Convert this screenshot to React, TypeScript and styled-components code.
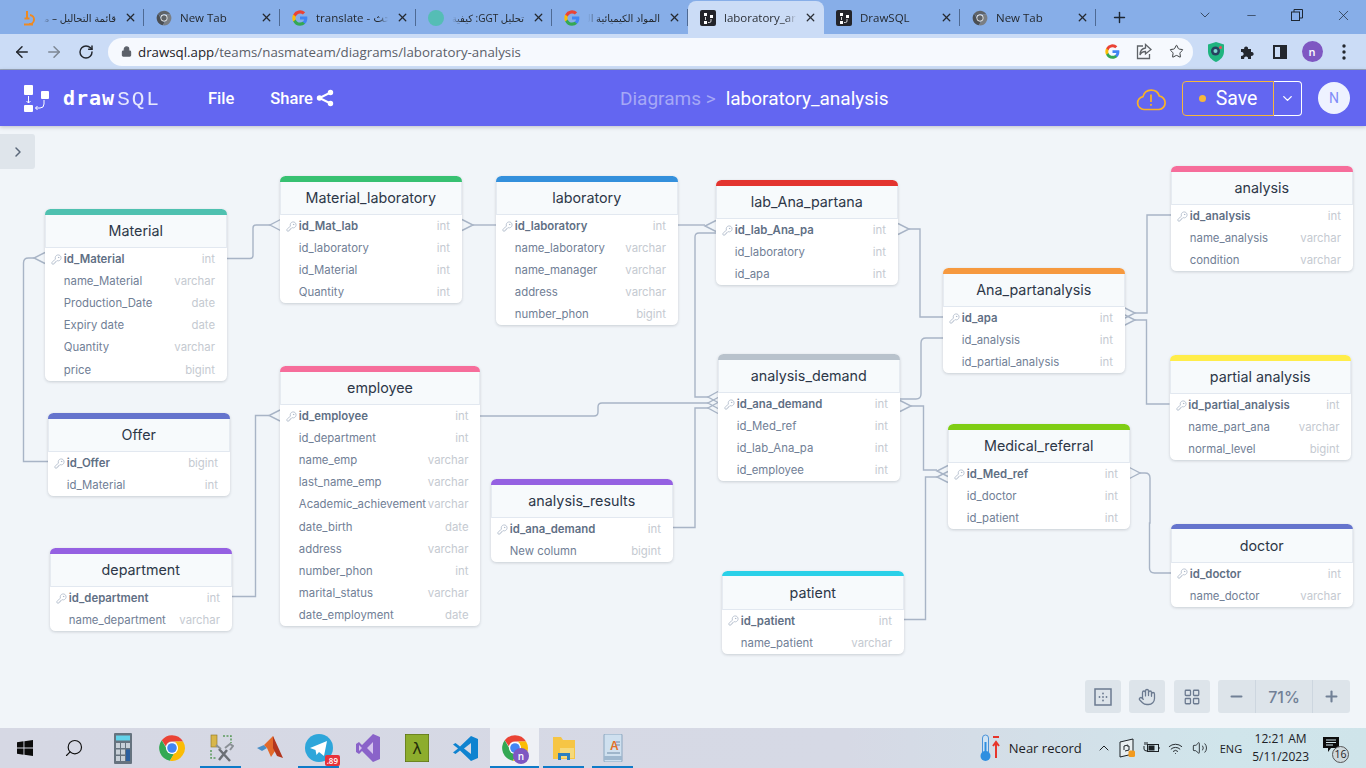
import React from "react";
import styled, { createGlobalStyle } from "styled-components";
import {
  ArrowLeft,
  ArrowRight,
  ChevronDown,
  ChevronRight,
  ChevronUp,
  Hand,
  KeyRound,
  LayoutGrid,
  Lock,
  Minus,
  Plus,
  RotateCw,
  Search,
  Star,
  Volume2,
  Wifi,
  X,
} from "lucide-react";

/* ------------------------------------------------------------------ */
/*  Data                                                               */
/* ------------------------------------------------------------------ */

type Column = { name: string; type: string };

type TableData = {
  title: string;
  color: string;
  x: number;
  y: number;
  width?: number;
  columns: Column[];
};

const col = (name: string, type: string): Column => ({ name, type });

const TABLES: TableData[] = [
  {
    title: "Material",
    color: "#4fc1b0",
    x: 45,
    y: 209,
    columns: [
      col("id_Material", "int"),
      col("name_Material", "varchar"),
      col("Production_Date", "date"),
      col("Expiry date", "date"),
      col("Quantity", "varchar"),
      col("price", "bigint"),
    ],
  },
  {
    title: "Material_laboratory",
    color: "#38c172",
    x: 280,
    y: 176,
    columns: [
      col("id_Mat_lab", "int"),
      col("id_laboratory", "int"),
      col("id_Material", "int"),
      col("Quantity", "int"),
    ],
  },
  {
    title: "laboratory",
    color: "#3490dc",
    x: 496,
    y: 176,
    columns: [
      col("id_laboratory", "int"),
      col("name_laboratory", "varchar"),
      col("name_manager", "varchar"),
      col("address", "varchar"),
      col("number_phon", "bigint"),
    ],
  },
  {
    title: "lab_Ana_partana",
    color: "#e3342f",
    x: 716,
    y: 180,
    columns: [
      col("id_lab_Ana_pa", "int"),
      col("id_laboratory", "int"),
      col("id_apa", "int"),
    ],
  },
  {
    title: "analysis",
    color: "#f66d9b",
    x: 1171,
    y: 166,
    columns: [
      col("id_analysis", "int"),
      col("name_analysis", "varchar"),
      col("condition", "varchar"),
    ],
  },
  {
    title: "Ana_partanalysis",
    color: "#f6993f",
    x: 943,
    y: 268,
    columns: [
      col("id_apa", "int"),
      col("id_analysis", "int"),
      col("id_partial_analysis", "int"),
    ],
  },
  {
    title: "partial analysis",
    color: "#ffed4a",
    x: 1169.5,
    y: 355,
    columns: [
      col("id_partial_analysis", "int"),
      col("name_part_ana", "varchar"),
      col("normal_level", "bigint"),
    ],
  },
  {
    title: "analysis_demand",
    color: "#b8c2cc",
    x: 718,
    y: 354,
    columns: [
      col("id_ana_demand", "int"),
      col("id_Med_ref", "int"),
      col("id_lab_Ana_pa", "int"),
      col("id_employee", "int"),
    ],
  },
  {
    title: "Medical_referral",
    color: "#7fcd14",
    x: 948,
    y: 424,
    columns: [
      col("id_Med_ref", "int"),
      col("id_doctor", "int"),
      col("id_patient", "int"),
    ],
  },
  {
    title: "doctor",
    color: "#6574cd",
    x: 1171,
    y: 523.5,
    columns: [col("id_doctor", "int"), col("name_doctor", "varchar")],
  },
  {
    title: "patient",
    color: "#2ad0e8",
    x: 722,
    y: 570.5,
    columns: [col("id_patient", "int"), col("name_patient", "varchar")],
  },
  {
    title: "analysis_results",
    color: "#9561e2",
    x: 491,
    y: 479,
    columns: [col("id_ana_demand", "int"), col("New column", "bigint")],
  },
  {
    title: "employee",
    color: "#f66d9b",
    x: 280,
    y: 366,
    width: 200,
    columns: [
      col("id_employee", "int"),
      col("id_department", "int"),
      col("name_emp", "varchar"),
      col("last_name_emp", "varchar"),
      col("Academic_achievement", "varchar"),
      col("date_birth", "date"),
      col("address", "varchar"),
      col("number_phon", "int"),
      col("marital_status", "varchar"),
      col("date_employment", "date"),
    ],
  },
  {
    title: "Offer",
    color: "#6574cd",
    x: 48,
    y: 413,
    columns: [col("id_Offer", "bigint"), col("id_Material", "int")],
  },
  {
    title: "department",
    color: "#9561e2",
    x: 50,
    y: 548,
    columns: [col("id_department", "int"), col("name_department", "varchar")],
  },
];

/* connector lines, in page coordinates */
const LINES = [
  "M227 258.5H250q3 0 3-3V228q0-3 3-3H270",
  "M48 461.5H23.5V263q0-5 5-5H34",
  "M473 225H496",
  "M678 225H705",
  "M716 233H699q-4 0-4 4V397H708",
  "M480 416H594q4 0 4-4V407q0-4 4-4H708",
  "M672 527.5H695V408H708",
  "M232 596.5H255.5V415.5H269",
  "M909 229H920V317H943",
  "M943 338H926q-5 0-5 5V394q0 5-5 5H900",
  "M911 406H923.5V470H937",
  "M904 619.5H925.5V477H937",
  "M1140 473H1145q5 0 5 5V523H1149.5V568q0 5 5 5H1171",
  "M1135 313H1147V215H1171",
  "M1135 320H1146.5V404H1169.5",
];

/* crow's feet: apex x, apex y, open end x */
const FEET: [number, number, number][] = [
  [270, 225, 280.5],
  [34, 258, 45],
  [473, 225, 462],
  [705, 226, 716],
  [708, 397, 718],
  [708, 403, 718],
  [708, 408, 718],
  [269, 415.5, 280],
  [909, 229, 898],
  [911, 406, 900],
  [937, 471, 948],
  [937, 477, 948],
  [1140, 473, 1129.5],
  [1135, 313, 1124],
  [1135, 320, 1124],
];

const TABS = [
  { title: "قائمة التحاليل – مد", icon: "lab", rtl: true },
  { title: "New Tab", icon: "chromium" },
  { title: "translate - بحث", icon: "google" },
  { title: "تحليل GGT: كيفية", icon: "teal", rtl: true },
  { title: "المواد الكيميائية الم", icon: "google", rtl: true },
  { title: "laboratory_analysis", icon: "drawsql", active: true },
  { title: "DrawSQL", icon: "drawsql" },
  { title: "New Tab", icon: "chromium" },
];

/* ------------------------------------------------------------------ */
/*  Global + frame                                                     */
/* ------------------------------------------------------------------ */

const GlobalStyle = createGlobalStyle`
  html, body { margin: 0; padding: 0; }
  body { font-family: "Inter", "Liberation Sans", sans-serif; }
  * { box-sizing: border-box; }
`;

const Screen = styled.div`
  width: 1366px;
  height: 768px;
  display: flex;
  flex-direction: column;
  overflow: hidden;
`;

/* ------------------------------------------------------------------ */
/*  Browser chrome                                                     */
/* ------------------------------------------------------------------ */

const TabStrip = styled.div`
  height: 34px;
  flex: none;
  display: flex;
  align-items: flex-end;
  padding-left: 8px;
  background: #87aee8;
`;

const Tab = styled.div<{ $active?: boolean }>`
  position: relative;
  width: 136px;
  height: 33px;
  flex: none;
  display: flex;
  align-items: center;
  padding-left: 12px;
  padding-right: 7px;
  gap: 8px;
  border-radius: 8px 8px 0 0;
  background: ${(p) => (p.$active ? "#cbdcf6" : "transparent")};
  color: ${(p) => (p.$active ? "#2b2f36" : "#24292f")};

  &::after {
    content: "";
    position: absolute;
    right: 0;
    top: 8px;
    bottom: 8px;
    width: 1px;
    background: ${(p) => (p.$active ? "transparent" : "#4e6a94")};
  }
`;

const TabTitle = styled.span<{ $rtl?: boolean }>`
  flex: 1;
  min-width: 0;
  font: ${(p) => (p.$rtl ? "10px" : "11.5px")} "Open Sans", "DejaVu Sans", sans-serif;
  white-space: nowrap;
  overflow: hidden;
  direction: ${(p) => (p.$rtl ? "rtl" : "ltr")};
  -webkit-mask-image: linear-gradient(${(p) => (p.$rtl ? "270deg" : "90deg")}, #000 86%, transparent 100%);
  mask-image: linear-gradient(${(p) => (p.$rtl ? "270deg" : "90deg")}, #000 86%, transparent 100%);
`;

const NewTab = styled.div`
  width: 46px;
  height: 33px;
  display: flex;
  align-items: center;
  justify-content: center;
  color: #1d2733;
`;

const WindowButtons = styled.div`
  margin-left: auto;
  align-self: flex-start;
  height: 30px;
  display: flex;
  align-items: center;
  color: #1d2733;
`;

const WindowButton = styled.div`
  width: 46px;
  height: 30px;
  display: flex;
  align-items: center;
  justify-content: center;
`;

const Toolbar = styled.div`
  height: 36px;
  flex: none;
  display: flex;
  align-items: center;
  padding-left: 6px;
  background: #cbdcf6;
  border-bottom: 1px solid #9aa5b8;
`;

const ToolButton = styled.div<{ $dim?: boolean }>`
  width: 32px;
  height: 32px;
  flex: none;
  display: flex;
  align-items: center;
  justify-content: center;
  color: ${(p) => (p.$dim ? "#7d8794" : "#23272e")};
`;

const Omnibox = styled.div`
  width: 1085px;
  height: 28px;
  margin-left: 6px;
  margin-right: 7px;
  flex: none;
  display: flex;
  align-items: center;
  padding-left: 13px;
  padding-right: 1px;
  border-radius: 14px;
  background: #f6f9fe;
`;

const Url = styled.span`
  margin-left: 6px;
  font: 13.3px "Open Sans", sans-serif;
  color: #5b6069;

  b {
    font-weight: 400;
    color: #1f2329;
  }
`;

const OmniIcons = styled.div`
  margin-left: auto;
  display: flex;
  align-items: center;
`;

const ProfileDot = styled.div`
  width: 21px;
  height: 21px;
  border-radius: 50%;
  background: #7e57c2;
  color: #fff;
  font: 600 11px "Open Sans", sans-serif;
  display: flex;
  align-items: center;
  justify-content: center;
`;

const TaskbarProfileDot = styled(ProfileDot)`
  position: absolute;
  right: 10px;
  bottom: 4px;
  width: 16px;
  height: 16px;
  font-size: 10px;
`;

/* ------------------------------------------------------------------ */
/*  App header                                                         */
/* ------------------------------------------------------------------ */

const Header = styled.header`
  position: relative;
  z-index: 2;
  height: 56px;
  flex: none;
  display: flex;
  align-items: center;
  padding: 0 16px 0 23px;
  background: #6366f1;
  box-shadow: 0 1px 4px rgba(30, 41, 59, 0.25);
  color: #fff;
`;

const LeftGroup = styled.div`
  width: 597px;
  flex: none;
  display: flex;
  align-items: center;
`;

const Wordmark = styled.div`
  margin-left: 13px;
  width: 145px;
  font: 700 20px "DejaVu Sans Mono", monospace;
  letter-spacing: 1px;

  span {
    margin-left: 2px;
    font: 400 21px "Liberation Mono", monospace;
    letter-spacing: 1.9px;
    opacity: 0.85;
  }
`;

const MenuItem = styled.div`
  display: flex;
  align-items: center;
  gap: 3px;
  margin-right: 36px;
  font: 500 16.5px Roboto, sans-serif;
`;

const Breadcrumb = styled.div`
  display: flex;
  align-items: center;
  gap: 10px;
  font: 400 19px Roboto, sans-serif;
  color: #a6a8f6;

  strong {
    font-weight: 400;
    color: #fff;
  }
`;

const RightGroup = styled.div`
  margin-left: auto;
  display: flex;
  align-items: center;
`;

const SaveGroup = styled.div`
  margin-left: 16px;
  margin-right: 16px;
  height: 35px;
  display: flex;
`;

const SaveButton = styled.div`
  width: 92px;
  display: flex;
  align-items: center;
  justify-content: center;
  gap: 10px;
  border: 1px solid #f6b73c;
  border-radius: 4px 0 0 4px;
  font: 400 19.5px Roboto, sans-serif;
`;

const Dot = styled.span`
  width: 7px;
  height: 7px;
  border-radius: 50%;
  background: #f6b73c;
`;

const SaveCaret = styled.div`
  width: 28px;
  display: flex;
  align-items: center;
  justify-content: center;
  border: 1px solid #fff;
  border-left: none;
  border-radius: 0 4px 4px 0;
`;

const Avatar = styled.div`
  width: 32px;
  height: 32px;
  border-radius: 50%;
  background: #eef2ff;
  color: #818cf8;
  font: 400 14px Roboto, sans-serif;
  display: flex;
  align-items: center;
  justify-content: center;
`;

/* ------------------------------------------------------------------ */
/*  Diagram                                                            */
/* ------------------------------------------------------------------ */

const Canvas = styled.main`
  position: relative;
  flex: 1;
  min-height: 0;
  overflow: hidden;
  background: #f1f5f9;
`;

const Wires = styled.svg`
  position: absolute;
  left: 0;
  top: 0;
  width: 1366px;
  height: 602px;
  fill: none;
  stroke: #a8b4c6;
  stroke-width: 1.4;
`;

const Card = styled.section<{ $x: number; $y: number; $w: number }>`
  position: absolute;
  left: ${(p) => p.$x}px;
  top: ${(p) => p.$y - 126}px;
  width: ${(p) => p.$w}px;
  border-radius: 5.5px;
  background: #fff;
  box-shadow: 0 1px 3px rgba(45, 55, 72, 0.2);
  overflow: hidden;
`;

const ColorBar = styled.div<{ $color: string }>`
  height: 5.5px;
  background: ${(p) => p.$color};
`;

const CardTitle = styled.h3`
  margin: 0;
  height: 33.6px;
  display: flex;
  align-items: center;
  justify-content: center;
  background: #f7fafc;
  border: 1px solid #e6ebf1;
  border-top: none;
  border-bottom-width: 1.5px;
  border-bottom-color: #e2e8f0;
  font: 400 14.3px Inter, sans-serif;
  color: #2d3748;
`;

const Row = styled.div`
  height: 22.08px;
  display: flex;
  align-items: center;
  padding: 0 11.5px 0 18.8px;
  position: relative;
  font: 400 11.36px Inter, sans-serif;
  white-space: nowrap;
`;

const KeyMark = styled.span`
  position: absolute;
  left: 6px;
  top: 5.5px;
  line-height: 0;
  color: #a0aec0;
`;

const ColumnName = styled.span<{ $primary?: boolean }>`
  color: ${(p) => (p.$primary ? "#5f6f84" : "#718096")};
  font-weight: ${(p) => (p.$primary ? 600 : 400)};
`;

const ColumnType = styled.span`
  margin-left: auto;
  color: #c5cad1;
`;

const ExpandButton = styled.div`
  position: absolute;
  left: 0;
  top: 8px;
  width: 35px;
  height: 35px;
  border-radius: 0 3px 3px 0;
  background: #dfe5eb;
  color: #5a6779;
  display: flex;
  align-items: center;
  justify-content: center;
`;

const Controls = styled.div`
  position: absolute;
  right: 16px;
  bottom: 15px;
  display: flex;
  gap: 8.5px;
  color: #6b7a90;
`;

const ControlBox = styled.div`
  width: 36px;
  height: 33px;
  border-radius: 3px;
  background: #dde4ea;
  display: flex;
  align-items: center;
  justify-content: center;
`;

const ZoomGroup = styled.div`
  display: flex;
  height: 33px;
  border-radius: 3px;
  overflow: hidden;
  background: #dde4ea;
  font: 500 16px Inter, sans-serif;
  color: #718096;
`;

const ZoomPart = styled.div<{ $wide?: boolean }>`
  width: ${(p) => (p.$wide ? 58 : 37)}px;
  display: flex;
  align-items: center;
  justify-content: center;
  border-left: ${(p) => (p.$wide ? "1px solid #cdd6df" : "none")};
  border-right: ${(p) => (p.$wide ? "1px solid #cdd6df" : "none")};
`;

/* ------------------------------------------------------------------ */
/*  Taskbar                                                            */
/* ------------------------------------------------------------------ */

const Taskbar = styled.footer`
  height: 40px;
  flex: none;
  display: flex;
  align-items: stretch;
  background: linear-gradient(90deg, #d6d8e4 0%, #d6d9e5 62%, #d0e5eb 90%, #cfe4ea 100%);
`;

const TaskItem = styled.div<{ $open?: boolean; $active?: boolean }>`
  position: relative;
  width: 49px;
  flex: none;
  display: flex;
  align-items: center;
  justify-content: center;
  background: ${(p) => (p.$active ? "#eef0f5" : "transparent")};

  &::after {
    content: "";
    display: ${(p) => (p.$open ? "block" : "none")};
    position: absolute;
    left: ${(p) => (p.$active ? 0 : 4)}px;
    right: ${(p) => (p.$active ? 0 : 4)}px;
    bottom: 0;
    height: 2px;
    background: #0f7bc8;
  }
`;

const MirroredSearch = styled(Search)`
  transform: scaleX(-1);
`;

const Badge = styled.span`
  position: absolute;
  right: 3px;
  bottom: 2px;
  padding: 0 2px;
  border-radius: 2px;
  background: #e8323a;
  color: #fff;
  font: 600 8px "Open Sans", sans-serif;
`;

const Tray = styled.div`
  margin-left: auto;
  display: flex;
  align-items: center;
  color: #1d2226;
`;

const TrayText = styled.span`
  font: 13px "Open Sans", sans-serif;
  margin-left: 9px;
  margin-right: 10px;
`;

const TrayIcon = styled.div`
  width: 24px;
  display: flex;
  align-items: center;
  justify-content: center;
`;

const Lang = styled.span`
  font: 11px "Open Sans", sans-serif;
  margin: 0 10px 0 8px;
`;

const Clock = styled.div`
  font: 12px/18px "Open Sans", sans-serif;
  text-align: center;
  white-space: nowrap;
`;

const Notice = styled.div`
  position: relative;
  width: 26px;
  height: 24px;
  margin-left: 14px;
  margin-right: 17px;
`;

const NoticeCount = styled.span`
  position: absolute;
  right: 0;
  bottom: -3px;
  width: 17px;
  height: 17px;
  border-radius: 50%;
  border: 1px solid #555;
  background: #cfd9dd;
  font: 10.5px/15px "Open Sans", sans-serif;
  text-align: center;
`;

/* ------------------------------------------------------------------ */
/*  Icons                                                              */
/* ------------------------------------------------------------------ */

function GoogleG({ size = 16 }: { size?: number }) {
  return (
    <svg width={size} height={size} viewBox="0 0 24 24">
      <path fill="#4285F4" d="M23 12.2c0-.8-.1-1.6-.2-2.3H12v4.4h6.2a5.3 5.3 0 0 1-2.3 3.5v2.9h3.7c2.2-2 3.4-5 3.4-8.5z" />
      <path fill="#34A853" d="M12 23.5c3.1 0 5.7-1 7.6-2.8l-3.7-2.9c-1 .7-2.3 1.1-3.9 1.1-3 0-5.5-2-6.4-4.7H1.8v3A11.5 11.5 0 0 0 12 23.5z" />
      <path fill="#FBBC05" d="M5.6 14.2a6.9 6.9 0 0 1 0-4.4v-3H1.8a11.5 11.5 0 0 0 0 10.4l3.8-3z" />
      <path fill="#EA4335" d="M12 5.100c1.700 0 3.200.6 4.400 1.700l3.300-3.300A11.500 11.500 0 0 0 1.800 6.800l3.800 3c.9-2.700 3.400-4.700 6.400-4.700z" />
    </svg>
  );
}

function ChromeLogo({ size = 16, mono = false }: { size?: number; mono?: boolean }) {
  const c = mono
    ? ["#5f6368", "#4a4e53", "#7a7e83", "#fff", "#5f6368"]
    : ["#ea4335", "#34a853", "#fbbc05", "#fff", "#4285f4"];
  return (
    <svg width={size} height={size} viewBox="0 0 24 24">
      <path fill={c[0]} d="M12 1a11 11 0 0 1 9.500 5.500H12a5.500 5.500 0 0 0-5.300 4L3.200 5.400A11 11 0 0 1 12 1z" />
      <path fill={c[1]} d="M3.200 5.400l4.800 8.400a5.500 5.500 0 0 0 5.600 3.500l-3.400 5.600A11 11 0 0 1 3.200 5.400z" />
      <path fill={c[2]} d="M21.500 6.500A11 11 0 0 1 10.200 22.900l4.800-8.300a5.500 5.500 0 0 0-.5-8.100z" />
      <circle cx="12" cy="12" r="5.200" fill={c[3]} />
      <circle cx="12" cy="12" r="4.100" fill={c[4]} />
    </svg>
  );
}

function DrawSqlMark({ size = 27, stroke = "#fff" }: { size?: number; stroke?: string }) {
  return (
    <svg width={size} height={size} viewBox="0 0 27 27" fill="none">
      <rect x="1" y="0" width="9" height="10" rx="1" fill={stroke} />
      <rect x="18" y="6" width="8" height="8" rx="1" fill={stroke} />
      <rect x="1" y="20" width="9" height="7" rx="1" fill={stroke} />
      <path d="M5.500 11V18M3.500 16l2 2 2-2" stroke={stroke} strokeWidth="1" />
      <path d="M21 15v4q0 4-4 4h-4.500M14.500 21l-2 2 2 2" stroke={stroke} strokeWidth="1" />
    </svg>
  );
}

function ShareNodes() {
  return (
    <svg width="18" height="18" viewBox="0 0 18 18" fill="#fff" stroke="#fff" strokeWidth="2">
      <path d="M14.500 3.500L3.500 9l11 5.500" fill="none" />
      <circle cx="14.500" cy="3.500" r="1.700" />
      <circle cx="3.500" cy="9" r="1.700" />
      <circle cx="14.500" cy="14.500" r="1.700" />
    </svg>
  );
}

function TabIcon({ kind }: { kind: string }) {
  if (kind === "google") return <GoogleG />;
  if (kind === "chromium") return <ChromeLogo mono />;
  if (kind === "teal") {
    return (
      <svg width="16" height="16" viewBox="0 0 16 16">
        <circle cx="8" cy="8" r="8" fill="#55bdb5" />
      </svg>
    );
  }
  if (kind === "lab") {
    return (
      <svg width="16" height="16" viewBox="0 0 16 16" fill="none" stroke="#ef8a22" strokeWidth="2">
        <path d="M7 1v7M4 14.500h9M10 5a4.500 4.500 0 0 1-1 9M4.500 8.500h5" />
      </svg>
    );
  }
  return (
    <svg width="16" height="16" viewBox="0 0 16 16">
      <rect width="16" height="16" rx="2" fill="#23242a" />
      <rect x="4" y="3" width="3" height="3" fill="#fff" />
      <rect x="10" y="5" width="3" height="3" fill="#fff" />
      <rect x="4" y="11" width="3" height="3" fill="#fff" />
      <path d="M11 9v2q0 1.500-1.500 1.500H8M5.500 7v3" stroke="#fff" strokeWidth=".8" fill="none" />
    </svg>
  );
}

function ShareArrow() {
  return (
    <svg width="20" height="20" viewBox="0 0 20 20" fill="none" stroke="#5f6368" strokeWidth="1.3">
      <path d="M9 4H3.500v12.500h12V12" />
      <path d="M11.500 2.500L17 7.500l-5.500 4.500V9.500C9 9.500 7 10.500 6 13c0-4 2-6.500 5.500-7z" />
    </svg>
  );
}

function Shield() {
  return (
    <svg width="18" height="20" viewBox="0 0 18 20">
      <path d="M9 0l8 2.500v7c0 5-3.500 8.500-8 10.500C4.500 18 1 14.500 1 9.500v-7z" fill="#1fb47f" />
      <circle cx="8.500" cy="9" r="4.500" fill="#27405f" />
      <circle cx="8.500" cy="9" r="2" fill="#7fd6d0" />
      <circle cx="13.500" cy="5.500" r="1.500" fill="#e8505b" />
    </svg>
  );
}

function Puzzle() {
  return (
    <svg width="16" height="16" viewBox="0 0 16 16" fill="#23272e">
      <path d="M1 5h3.200a2 2 0 1 1 3.800 0H11v3a2 2 0 1 1 0 3.800V15H8a2 2 0 1 0-3.800 0H1v-3.200a2 2 0 1 0 0-3.800z" />
    </svg>
  );
}

function SidePanel() {
  return (
    <svg width="14" height="14" viewBox="0 0 14 14">
      <path fill="#23272e" fillRule="evenodd" d="M0 0h14v14H0zM2 2v10h5V2z" />
    </svg>
  );
}

function Kebab() {
  return (
    <svg width="4" height="16" viewBox="0 0 4 16" fill="#23272e">
      <circle cx="2" cy="2" r="1.700" />
      <circle cx="2" cy="8" r="1.700" />
      <circle cx="2" cy="14" r="1.700" />
    </svg>
  );
}

function CloudWarning() {
  return (
    <svg width="30" height="25" viewBox="0 0 30 25" fill="none" stroke="#fbb324" strokeWidth="1.7">
      <path d="M8 23.500a6.500 6.500 0 0 1-1-12.900 8.500 8.500 0 0 1 16.300-.6A6.800 6.800 0 0 1 23 23.500z" />
      <path d="M15 8.500v7.500M15 18v1.800" />
    </svg>
  );
}

function RestoreIcon() {
  return (
    <svg width="12" height="12" viewBox="0 0 12 12" fill="none" stroke="#1d2733">
      <rect x="0.500" y="3" width="8" height="8.500" />
      <path d="M3 3V.5h8.500V9H8.500" />
    </svg>
  );
}

function FitIcon() {
  return (
    <svg width="18" height="18" viewBox="0 0 18 18" fill="none" stroke="currentColor" strokeWidth="1.500">
      <rect x="1" y="1" width="16" height="16" />
      <g fill="currentColor" stroke="none">
        <circle cx="9" cy="5.500" r=".9" />
        <circle cx="9" cy="9" r=".9" />
        <circle cx="9" cy="12.500" r=".9" />
        <circle cx="5.500" cy="9" r=".9" />
        <circle cx="12.500" cy="9" r=".9" />
      </g>
    </svg>
  );
}

function WindowsLogo() {
  return (
    <svg width="16" height="16" viewBox="0 0 16 16" fill="#0c0c0c">
      <path d="M0 2.200L6.500 1.300V7.500H0zM7.400 1.200L16 0V7.500H7.400zM0 8.400H6.500V14.700L0 13.800zM7.400 8.400H16V16L7.400 14.800z" />
    </svg>
  );
}

function Calculator() {
  return (
    <svg width="18" height="31" viewBox="0 0 18 31">
      <rect width="18" height="31" rx="1" fill="#66737f" />
      <rect x="2" y="2.500" width="14" height="5" fill="#63d3ea" />
      <g fill="#c8d0d8">
        <rect x="2" y="10" width="4" height="5" />
        <rect x="7" y="10" width="4" height="5" />
        <rect x="12" y="10" width="4" height="5" />
        <rect x="2" y="16.500" width="4" height="5" />
        <rect x="7" y="16.500" width="4" height="5" />
        <rect x="2" y="23" width="4" height="5" />
        <rect x="7" y="23" width="4" height="5" />
      </g>
      <rect x="12" y="16.500" width="4" height="11.500" fill="#2b5f9e" />
    </svg>
  );
}

function ToolsIcon() {
  return (
    <svg width="26" height="28" viewBox="0 0 26 28" fill="none">
      <rect x="3" y="1" width="6" height="12" fill="#d8b64a" stroke="#8a7320" strokeWidth=".6" />
      <path d="M15 2h8v7M3 16v8h6" stroke="#5c9a5c" strokeWidth="1.500" strokeDasharray="2 1.500" />
      <path d="M11 26l8-10M22 27l-11-12" stroke="#6b6f75" strokeWidth="2.500" />
      <path d="M8 11l5 4M17 14l5-4 3 2-3 4" stroke="#8b9096" strokeWidth="2" />
    </svg>
  );
}

function Matlab() {
  return (
    <svg width="26" height="24" viewBox="0 0 26 24">
      <path d="M0 12l7-3 3 3-5 3z" fill="#4a90c8" />
      <path d="M7 9L16 0l4 12-6 9-4-9z" fill="#e2692a" />
      <path d="M16 0l10 22-6-2-4-8z" fill="#b2361e" />
    </svg>
  );
}

function Telegram() {
  return (
    <svg width="28" height="28" viewBox="0 0 28 28">
      <circle cx="14" cy="14" r="14" fill="#2ea6da" />
      <path d="M5 14l17-7-3 15-5-4-2.500 3-1-5z" fill="#fff" />
    </svg>
  );
}

function VisualStudio() {
  return (
    <svg width="24" height="28" viewBox="0 0 24 28">
      <path d="M17 0l7 3v22l-7 3L6 17l-3 3-3-2V10l3-2 3 3z" fill="#8a63c9" />
      <path d="M17 8v12l-6-6zM3 11v6l3-3z" fill="#d4c3ee" />
    </svg>
  );
}

function Lambda() {
  return (
    <svg width="24" height="28" viewBox="0 0 24 28">
      <rect width="24" height="28" fill="#8dad2d" stroke="#4d5d16" />
      <text x="12" y="20" textAnchor="middle" fontSize="16" fontFamily="DejaVu Sans" fill="#24300a">
        λ
      </text>
    </svg>
  );
}

function VSCode() {
  return (
    <svg width="25" height="25" viewBox="0 0 25 25">
      <path d="M18 0l7 3v19l-7 3L7 14.500 2.500 18 0 16.500l5-4-5-4L2.500 7 7 10.500z" fill="#0f83d0" />
      <path d="M18 7v11l-7-5.500z" fill="#d6d9e5" />
    </svg>
  );
}

function Folder() {
  return (
    <svg width="24" height="24" viewBox="0 0 24 24">
      <path d="M1 1h8l2 3h12v19H1z" fill="#f6c544" />
      <rect x="8" y="12" width="14" height="10" fill="#f6d97a" />
      <path d="M6 17h12v7h-3v-4H9v4H6z" fill="#2b7fc0" />
    </svg>
  );
}

function Wordpad() {
  return (
    <svg width="22" height="28" viewBox="0 0 22 28">
      <rect x="2" y="0" width="18" height="28" rx="1" fill="#cfe0ef" stroke="#8ba6bf" />
      <rect x="2" y="22" width="18" height="4" fill="#9fb8cf" />
      <text x="8" y="16" fontSize="12" fontWeight="700" fontFamily="Liberation Sans" fill="#e2702a">
        A
      </text>
      <path d="M14 8h4M14 11h4M5 19h13" stroke="#6f8ba6" />
    </svg>
  );
}

function Thermo() {
  return (
    <svg width="20" height="28" viewBox="0 0 20 28" fill="none">
      <rect x="2.500" y="1" width="6" height="20" rx="3" fill="#cfe3f4" stroke="#4a92d8" />
      <circle cx="5.500" cy="22" r="5" fill="#2f8fe0" />
      <path d="M5.500 8v12" stroke="#2f8fe0" strokeWidth="2" />
      <path d="M13 3h6M16 24V9M13 12l3-4 3 4" stroke="#e7352b" strokeWidth="2" />
    </svg>
  );
}

function MeetIcon() {
  return (
    <svg width="17" height="20" viewBox="0 0 17 20" fill="none" stroke="#1d2226">
      <path d="M1 4l13-3v15L1 19z" fill="#e8eef0" />
      <path d="M5 12V8l4-1v2M10 8v4l-4 1" />
      <rect x="9.500" y="12.500" width="6.500" height="6.500" rx="1.500" fill="#f29a1e" stroke="none" />
    </svg>
  );
}

function PowerIcon() {
  return (
    <svg width="17" height="14" viewBox="0 0 17 14" fill="none" stroke="#1d2226">
      <rect x="4.500" y="3.500" width="11" height="7" />
      <rect x="6" y="5" width="5" height="4" fill="#1d2226" />
      <path d="M16 6v2M1 5v3q0 2 3 2M2 1v3M4 1v3" />
    </svg>
  );
}

function NoticeIcon() {
  return (
    <svg width="16" height="15" viewBox="0 0 16 15">
      <path d="M0 0h16v11H8l-3 4v-4H0z" fill="#0c0c0c" />
      <path d="M3 3h10M3 5.500h10M3 8h7" stroke="#d0e5eb" />
    </svg>
  );
}

/* ------------------------------------------------------------------ */
/*  Parts                                                              */
/* ------------------------------------------------------------------ */

function DiagramTable({ table }: { table: TableData }) {
  return (
    <Card $x={table.x} $y={table.y} $w={table.width ?? 181.5}>
      <ColorBar $color={table.color} />
      <CardTitle>{table.title}</CardTitle>
      {table.columns.map((column, i) => (
        <Row key={column.name}>
          {i === 0 && (
            <KeyMark>
              <KeyRound size={11} strokeWidth={1.5} />
            </KeyMark>
          )}
          <ColumnName $primary={i === 0}>{column.name}</ColumnName>
          <ColumnType>{column.type}</ColumnType>
        </Row>
      ))}
    </Card>
  );
}

function Connectors() {
  return (
    <Wires viewBox="0 126 1366 602">
      {LINES.map((d) => (
        <path key={d} d={d} />
      ))}
      {FEET.map(([ax, ay, ex]) => (
        <path key={`${ax}-${ay}`} d={`M${ex} ${ay - 5.5}L${ax} ${ay}L${ex} ${ay + 5.5}`} />
      ))}
    </Wires>
  );
}

/* ------------------------------------------------------------------ */
/*  App                                                                */
/* ------------------------------------------------------------------ */

export default function App() {
  return (
    <Screen>
      <GlobalStyle />

      <TabStrip>
        {TABS.map((tab, i) => (
          <Tab key={i} $active={tab.active}>
            <TabIcon kind={tab.icon} />
            <TabTitle $rtl={tab.rtl}>{tab.title}</TabTitle>
            <X size={13} strokeWidth={2.4} />
          </Tab>
        ))}
        <NewTab>
          <Plus size={17} strokeWidth={2} />
        </NewTab>
        <WindowButtons>
          <WindowButton>
            <ChevronDown size={16} strokeWidth={1.1} />
          </WindowButton>
          <WindowButton>
            <Minus size={13} strokeWidth={1.2} />
          </WindowButton>
          <WindowButton>
            <RestoreIcon />
          </WindowButton>
          <WindowButton>
            <X size={17} strokeWidth={1} />
          </WindowButton>
        </WindowButtons>
      </TabStrip>

      <Toolbar>
        <ToolButton>
          <ArrowLeft size={18} strokeWidth={2} />
        </ToolButton>
        <ToolButton $dim>
          <ArrowRight size={18} strokeWidth={2} />
        </ToolButton>
        <ToolButton>
          <RotateCw size={16} strokeWidth={2.2} />
        </ToolButton>
        <Omnibox>
          <Lock size={11} fill="#5b6069" color="#5b6069" strokeWidth={2.4} />
          <Url>
            <b>drawsql.app</b>/teams/nasmateam/diagrams/laboratory-analysis
          </Url>
          <OmniIcons>
            <ToolButton>
              <GoogleG size={15} />
            </ToolButton>
            <ToolButton>
              <ShareArrow />
            </ToolButton>
            <ToolButton>
              <Star size={15} strokeWidth={1.6} color="#3c4043" />
            </ToolButton>
          </OmniIcons>
        </Omnibox>
        <ToolButton>
          <Shield />
        </ToolButton>
        <ToolButton>
          <Puzzle />
        </ToolButton>
        <ToolButton>
          <SidePanel />
        </ToolButton>
        <ToolButton>
          <ProfileDot>n</ProfileDot>
        </ToolButton>
        <ToolButton>
          <Kebab />
        </ToolButton>
      </Toolbar>

      <Header>
        <LeftGroup>
          <DrawSqlMark />
          <Wordmark>
            draw<span>SQL</span>
          </Wordmark>
          <MenuItem>File</MenuItem>
          <MenuItem>
            Share
            <ShareNodes />
          </MenuItem>
        </LeftGroup>
        <Breadcrumb>
          Diagrams &gt;<strong>laboratory_analysis</strong>
        </Breadcrumb>
        <RightGroup>
          <CloudWarning />
          <SaveGroup>
            <SaveButton>
              <Dot />
              Save
            </SaveButton>
            <SaveCaret>
              <ChevronDown size={15} strokeWidth={2.2} />
            </SaveCaret>
          </SaveGroup>
          <Avatar>N</Avatar>
        </RightGroup>
      </Header>

      <Canvas>
        <Connectors />
        {TABLES.map((table) => (
          <DiagramTable key={table.title} table={table} />
        ))}
        <ExpandButton>
          <ChevronRight size={16} strokeWidth={2.2} />
        </ExpandButton>
        <Controls>
          <ControlBox>
            <FitIcon />
          </ControlBox>
          <ControlBox>
            <Hand size={18} strokeWidth={1.7} />
          </ControlBox>
          <ControlBox>
            <LayoutGrid size={18} strokeWidth={1.7} />
          </ControlBox>
          <ZoomGroup>
            <ZoomPart>
              <Minus size={17} strokeWidth={3} />
            </ZoomPart>
            <ZoomPart $wide>71%</ZoomPart>
            <ZoomPart>
              <Plus size={17} strokeWidth={3} />
            </ZoomPart>
          </ZoomGroup>
        </Controls>
      </Canvas>

      <Taskbar>
        <TaskItem>
          <WindowsLogo />
        </TaskItem>
        <TaskItem>
          <MirroredSearch size={20} strokeWidth={1.4} color="#111" />
        </TaskItem>
        <TaskItem>
          <Calculator />
        </TaskItem>
        <TaskItem>
          <ChromeLogo size={28} />
        </TaskItem>
        <TaskItem $open>
          <ToolsIcon />
        </TaskItem>
        <TaskItem>
          <Matlab />
        </TaskItem>
        <TaskItem $open>
          <Telegram />
          <Badge>.89</Badge>
        </TaskItem>
        <TaskItem>
          <VisualStudio />
        </TaskItem>
        <TaskItem>
          <Lambda />
        </TaskItem>
        <TaskItem>
          <VSCode />
        </TaskItem>
        <TaskItem $open $active>
          <ChromeLogo size={28} />
          <TaskbarProfileDot>n</TaskbarProfileDot>
        </TaskItem>
        <TaskItem $open>
          <Folder />
        </TaskItem>
        <TaskItem $open>
          <Wordpad />
        </TaskItem>
        <Tray>
          <Thermo />
          <TrayText>Near record</TrayText>
          <TrayIcon>
            <ChevronUp size={16} strokeWidth={1.5} />
          </TrayIcon>
          <TrayIcon>
            <MeetIcon />
          </TrayIcon>
          <TrayIcon>
            <PowerIcon />
          </TrayIcon>
          <TrayIcon>
            <Wifi size={15} strokeWidth={1.5} />
          </TrayIcon>
          <TrayIcon>
            <Volume2 size={16} strokeWidth={1.3} />
          </TrayIcon>
          <Lang>ENG</Lang>
          <Clock>
            12:21 AM
            <br />
            5/11/2023
          </Clock>
          <Notice>
            <NoticeIcon />
            <NoticeCount>16</NoticeCount>
          </Notice>
        </Tray>
      </Taskbar>
    </Screen>
  );
}
